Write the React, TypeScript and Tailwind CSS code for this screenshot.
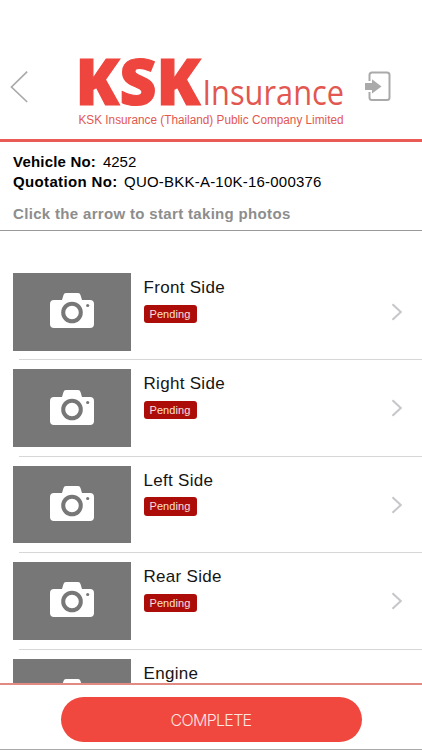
const parts = ['Front Side', 'Right Side', 'Left Side', 'Rear Side', 'Engine'];

function Logo() {
  return (
    <svg className="h-[84px] w-[270px] shrink-0" viewBox="0 -4 270 84" fill="#ee453e" overflow="visible" role="img">
      <text x="-1.500" y="54.500" fontFamily="'Open Sans', sans-serif" fontWeight="800" fontSize="63" stroke="#ee453e" strokeWidth="1.200" textLength="125" lengthAdjust="spacingAndGlyphs">KSK</text>
      <text x="125.500" y="55" fontFamily="'Open Sans', sans-serif" fontWeight="400" fontSize="34.500" fill="#e2574f" textLength="141.500" lengthAdjust="spacingAndGlyphs">Insurance</text>
      <text x="1.500" y="73.500" fontFamily="'Liberation Sans', sans-serif" fontSize="12.500" fill="#e2574f" textLength="265" lengthAdjust="spacingAndGlyphs">KSK Insurance (Thailand) Public Company Limited</text>
    </svg>
  );
}

function Camera() {
  return (
    <svg className="mb-[2px] h-[35px] w-[44px]" viewBox="0 0 44 35">
      <path d="M4 7h8l1.500-5Q14 0 16 0h12q2 0 2.500 2L32 7h8q4 0 4 4v20q0 4-4 4H4q-4 0-4-4V11q0-4 4-4Z" fill="white" />
      <circle cx="22" cy="19.500" r="8.800" fill="none" stroke="#777" strokeWidth="4" />
      <circle cx="37.700" cy="12.500" r="1.600" fill="#777" />
    </svg>
  );
}

function PhotoRow({ name }: { name: string }) {
  return (
    <li className="flex h-[96.4px] shrink-0 flex-col pl-[13px]">
      <div className="flex h-[86.400px]">
        <div className="flex h-[77.600px] w-[117.500px] shrink-0 items-center justify-center bg-[#777]">
          <Camera />
        </div>
        <div className="flex flex-1 flex-col items-start pl-[13px] pt-[5px]">
          <span className="whitespace-nowrap text-[17px] leading-[20px] tracking-[0.300px] text-[#151515]">{name}</span>
          <span className="mt-[6.500px] flex h-[18.500px] w-[53px] items-center justify-center rounded-[3px] bg-[#ad0d09] text-[11px] tracking-[0.1px] text-[#f8e0dd]">Pending</span>
        </div>
        <svg className="mr-[19px] mt-[30px] h-[18px] w-[12px]" viewBox="0 0 12 18" fill="none" stroke="#c6c6ca" strokeWidth="2">
          <path d="m1.500 1.200 8.300 7.800-8.300 7.800" />
        </svg>
      </div>
      <div className="ml-[6px] h-px bg-[#d7d7d7]" />
    </li>
  );
}

export default function App() {
  return (
    <main className="flex h-[750px] w-[422px] flex-col overflow-hidden bg-white font-['Liberation_Sans',Arial,sans-serif] text-black">
      <header className="flex h-[142px] shrink-0 items-start border-b-[3px] border-[#e95b54] pt-[46px]">
        <button className="ml-[10px] mt-[24px] h-[34px] w-[19px]" aria-label="Back">
          <svg viewBox="0 0 19 34" fill="none" stroke="#aaa" strokeWidth="1.700">
            <path d="M17.200 1.700 1.500 17l15.700 15" />
          </svg>
        </button>
        <div className="ml-[48px]"><Logo /></div>
        <button className="ml-[17px] mt-[25px] h-[31px] w-[28px]" aria-label="Exit">
          <svg viewBox="0 0 28 31" fill="none">
            <path d="M5.500 10V4q0-2.500 2.500-2.500h15Q25.500 1.500 25.500 4v22.500q0 2.500-2.500 2.500H8q-2.500 0-2.500-2.500V21" stroke="#aaa" strokeWidth="2" />
            <path d="M1 12h7V8.200l9.500 7.300L8 22.500V19H1Z" fill="#aaa" />
          </svg>
        </button>
      </header>
      <section className="h-[89px] shrink-0 border-b-[1.500px] border-[#999] pl-[13px] pt-[11px]">
        <div className="flex h-[19px] items-center whitespace-nowrap text-[15px]">
          <b className="w-[90px] tracking-[0.200px]">Vehicle No:</b>
          <span className="tracking-[-0.050px]">4252</span>
        </div>
        <div className="flex h-[20px] items-center whitespace-nowrap text-[15px]">
          <b className="w-[111px] tracking-[0.350px]">Quotation No:</b>
          <span className="text-[15px] tracking-[0.220px]">QUO-BKK-A-10K-16-000376</span>
        </div>
        <p className="mt-[13px] whitespace-nowrap text-[15px] leading-[18px] font-bold tracking-[0.330px] text-[#8d8d8d]">Click the arrow to start taking photos</p>
      </section>
      <ul className="min-h-0 flex-1 overflow-hidden pt-[42px]">
        {parts.map((name) => <PhotoRow key={name} name={name} />)}
      </ul>
      <footer className="flex h-[67px] shrink-0 justify-center border-b border-[#aaa] border-t-2 border-t-[#e28983] pt-[11.500px]">
        <button className="h-[45px] w-[301px] rounded-full bg-[#f0473f] pt-[2px] font-['Inter',sans-serif] text-[16px] font-light tracking-[-0.700px] text-[#fbe4e1]">COMPLETE</button>
      </footer>
    </main>
  );
}
